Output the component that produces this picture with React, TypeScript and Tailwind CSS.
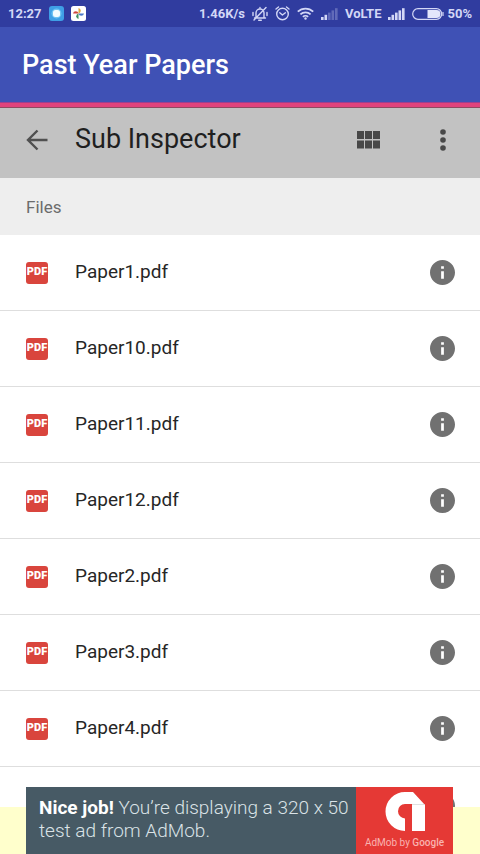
import React from 'react';

const files = ['Paper1.pdf', 'Paper10.pdf', 'Paper11.pdf', 'Paper12.pdf', 'Paper2.pdf', 'Paper3.pdf', 'Paper4.pdf'];

const SignalIcon: React.FC<{ level: number }> = ({ level }) => (
    <svg width="17" height="12" viewBox="0 0 17 12" fill="#d3d7f6" aria-hidden="true">
        {[0, 1, 2, 3, 4].map(i => (
            <rect key={i} x={i * 3.5} y={9 - i * 2.2} width="2.6" height={3 + i * 2.2} opacity={i < level ? 1 : 0.3} />
        ))}
    </svg>
);

const BrowserIcon = () => (
    <svg width="15" height="15" viewBox="0 0 15 15" aria-hidden="true">
        <rect width="15" height="15" rx="3" fill="#3f9fe6" />
        <circle cx="7.5" cy="7.5" r="5" fill="#6fc3f4" />
        <rect x="4" y="4" width="7" height="7" rx="2.5" fill="#f2fbff" />
    </svg>
);

const PhotosIcon = () => (
    <svg width="15" height="15" viewBox="0 0 15 15" aria-hidden="true">
        <rect width="15" height="15" rx="2.5" fill="#fff" />
        <path d="M7.5 7.5V2a2.8 2.8 0 0 1 0 5.500z" fill="#e0a63a" />
        <path d="M7.5 7.5H13a2.8 2.8 0 0 1-5.500 0z" fill="#4a78c8" />
        <path d="M7.5 7.5V13a2.8 2.8 0 0 1 0-5.500z" fill="#3f9160" />
        <path d="M7.5 7.5H2a2.8 2.8 0 0 1 5.500 0z" fill="#d0463c" />
    </svg>
);

const MutedBellIcon = () => (
    <svg width="16" height="16" viewBox="0 0 16 16" fill="none" stroke="#d3d7f6" strokeWidth="1.4" strokeLinecap="round" strokeLinejoin="round" aria-hidden="true">
        <path d="M2.5 12h11M4 11.5V7a4 4 0 0 1 8 0v5M8 3V1.5M6.7 14.3h2.6M2 14 14 1.500M1 6.5v3M15 6.5v3" />
    </svg>
);

const AlarmIcon = () => (
    <svg width="15" height="15" viewBox="0 0 15 15" fill="none" stroke="#d3d7f6" strokeWidth="1.4" strokeLinecap="round" strokeLinejoin="round" aria-hidden="true">
        <circle cx="7.5" cy="8" r="5.8" />
        <path d="M4.8 6.8 7.4 9l3-2.2M1 3l2.5-2M14 3l-2.5-2" />
    </svg>
);

const WifiIcon = () => (
    <svg width="17" height="13" viewBox="0 0 17 13" fill="none" stroke="#d3d7f6" strokeWidth="1.8" aria-hidden="true">
        <path d="M.8 4.7a11 11 0 0 1 15.4 0M3.4 7.4a7.3 7.3 0 0 1 10.2 0M5.9 9.9a3.7 3.7 0 0 1 5.2 0" />
        <circle cx="8.5" cy="11.5" r="1.2" fill="#d3d7f6" stroke="none" />
    </svg>
);

const BatteryIcon = () => (
    <svg width="32" height="12" viewBox="0 0 32 12" aria-hidden="true">
        <rect x=".7" y=".7" width="29" height="10.6" rx="5.3" fill="none" stroke="#d3d7f6" strokeWidth="1.2" />
        <path d="M15.5 2h9a4 4 0 0 1 0 8h-9z" fill="#e3e6fb" />
        <path d="M31 4v4" stroke="#d3d7f6" strokeWidth="1.2" />
    </svg>
);

const BackIcon = () => (
    <svg width="22" height="22" viewBox="0 0 22 22" fill="none" stroke="#505050" strokeWidth="2.4" aria-hidden="true">
        <path d="M21.5 11H2.5M11.5 1.5 2 11l9.5 9.5" />
    </svg>
);

const GridIcon = () => (
    <svg width="23" height="18" viewBox="0 0 23 18" fill="#484848" aria-hidden="true">
        <path d="M0 0h7v8H0zM8 0h7v8H8zM16 0h7v8h-7zM0 9.5h7v8H0zM8 9.5h7v8H8zM16 9.5h7v8h-7z" />
    </svg>
);

const MoreIcon = () => (
    <svg width="6" height="22" viewBox="0 0 6 22" fill="#484848" aria-hidden="true">
        <circle cx="3" cy="3" r="2.8" />
        <circle cx="3" cy="11" r="2.8" />
        <circle cx="3" cy="19" r="2.8" />
    </svg>
);

const InfoIcon = () => (
    <svg width="25" height="25" viewBox="2 2 20 20" fill="#717171" aria-hidden="true">
        <path d="M12 2C6.48 2 2 6.48 2 12s4.48 10 10 10 10-4.48 10-10S17.52 2 12 2zm1.100 15h-2.200v-6h2.200v6zm0-8h-2.200V7h2.200v2z" />
    </svg>
);

const AdMobLogo = () => (
    <svg width="40" height="41" viewBox="0 0 40 41" fill="#fff" aria-hidden="true">
        <path d="M20 1h8l12 13v26H27V13h-7a7 7.200 0 0 0 0 14.400V40A19.500 19.500 0 0 1 20 1z" />
        <path d="M27 13.500h13" stroke="#d9d9d9" strokeWidth=".8" />
    </svg>
);

const FileRow: React.FC<{ name: string }> = ({ name }) => (
    <li className="flex h-[76px] shrink-0 items-center border-b border-[#dedede] pr-[25px] pl-[26px]">
        <span className="flex h-[22px] w-[22px] items-center justify-center rounded-[3px] bg-[#d9453d] text-[11px] font-black text-white">PDF</span>
        <span className="ml-[27px] flex-1 pb-[2px] text-[19px] leading-6 text-[#262626]">{name}</span>
        <button type="button" aria-label={`Details of ${name}`}>
            <InfoIcon />
        </button>
    </li>
);

const App: React.FC = () => {
    return (
        <div className="flex h-screen flex-col overflow-hidden bg-white font-[Roboto,sans-serif]">
            <div className="flex h-[27px] shrink-0 items-center justify-between bg-[#303c9f] px-2 text-[13px] font-bold text-[#d3d7f6]">
                <div className="flex items-center gap-[7px]">
                    <span>12:27</span>
                    <BrowserIcon />
                    <PhotosIcon />
                </div>
                <div className="flex items-center gap-[7px]">
                    <span>1.46K/s</span>
                    <MutedBellIcon />
                    <AlarmIcon />
                    <WifiIcon />
                    <SignalIcon level={2} />
                    <span>VoLTE</span>
                    <SignalIcon level={5} />
                    <div className="flex items-center gap-[3px]">
                        <BatteryIcon />
                        <span>50%</span>
                    </div>
                </div>
            </div>

            <header className="flex h-[75px] shrink-0 items-center bg-[#3f51b5] px-[22px]">
                <h1 className="pt-[2px] text-[27px] font-medium text-white">Past Year Papers</h1>
            </header>
            <div className="h-[6px] shrink-0 border-t border-b border-t-[#9c3f8e] border-b-[#8f4a60] bg-[#e0437c]" />

            <div className="flex h-[70px] shrink-0 items-center bg-[#c2c2c2] pr-[34px] pb-[6px] pl-[26px]">
                <button type="button" aria-label="Back">
                    <BackIcon />
                </button>
                <h2 className="ml-[27px] flex-1 pb-[2px] text-[27px] text-[#1f1f1f]">Sub Inspector</h2>
                <button type="button" aria-label="Grid view">
                    <GridIcon />
                </button>
                <button type="button" aria-label="More options" className="ml-[60px]">
                    <MoreIcon />
                </button>
            </div>

            <h3 className="flex h-[57px] shrink-0 items-center bg-[#eeeeee] px-[26px] pt-[2px] text-[17px] text-[#6b6b6b]">Files</h3>

            <ul className="flex min-h-0 flex-1 flex-col overflow-hidden">
                {files.map(name => (
                    <FileRow key={name} name={name} />
                ))}
                <li className="flex h-[76px] shrink-0 items-center justify-end pr-[25px]">
                    <InfoIcon />
                </li>
            </ul>

            <footer className="relative h-[47px] shrink-0 bg-[#ffffcc]">
                <a href="#admob" className="absolute right-[27px] bottom-0 left-[26px] flex h-[67px]">
                    <p className="flex-1 bg-[#475a65] pt-[9px] pl-[13px] text-[19px] leading-[23px] font-light text-[#dbe3e7]">
                        <strong className="font-bold text-white">Nice job!</strong> You’re displaying a 320 x 50
                        <br />
                        test ad from AdMob.
                    </p>
                    <div className="flex w-[97px] flex-col items-center bg-[#e53935] pt-1">
                        <AdMobLogo />
                        <span className="text-[10px] leading-[22px] text-[#f9b3b0]">
                            AdMob by <span className="font-medium">Google</span>
                        </span>
                    </div>
                </a>
            </footer>
        </div>
    );
};

export default App;
